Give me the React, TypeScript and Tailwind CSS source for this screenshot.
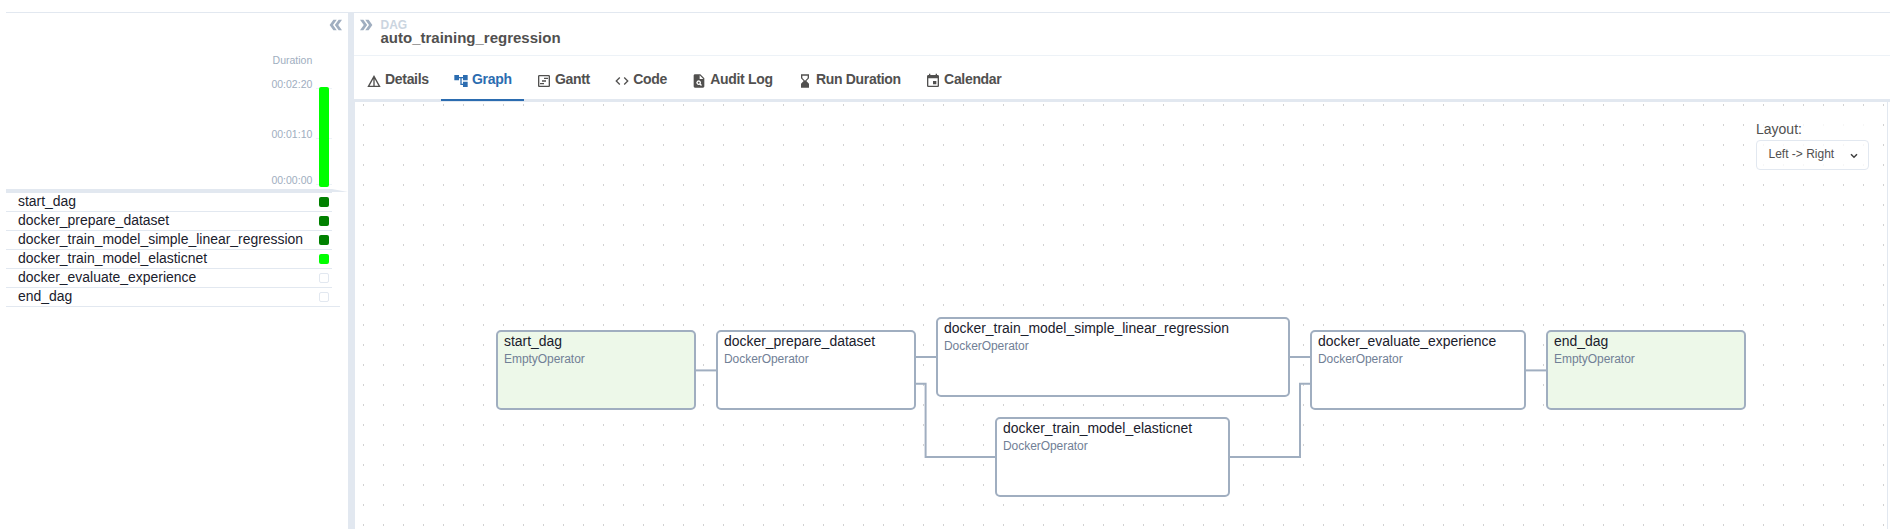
import React from "react";
import type { IconType } from "react-icons";
import {
  MdAccountTree,
  MdCode,
  MdDetails,
  MdDoubleArrow,
  MdEvent,
  MdHourglassBottom,
  MdOutlineViewTimeline,
  MdPlagiarism,
} from "react-icons/md";

const tasks = [
  { id: "start_dag", color: "bg-[#008000]" },
  { id: "docker_prepare_dataset", color: "bg-[#008000]" },
  { id: "docker_train_model_simple_linear_regression", color: "bg-[#008000]" },
  { id: "docker_train_model_elasticnet", color: "bg-[#00ff00]" },
  { id: "docker_evaluate_experience", color: "border border-[#e2e8f0] bg-white" },
  { id: "end_dag", color: "border border-[#e2e8f0] bg-white" },
];

const tabs: { label: string; icon: IconType; active?: boolean }[] = [
  { label: "Details", icon: MdDetails },
  { label: "Graph", icon: MdAccountTree, active: true },
  { label: "Gantt", icon: MdOutlineViewTimeline },
  { label: "Code", icon: MdCode },
  { label: "Audit Log", icon: MdPlagiarism },
  { label: "Run Duration", icon: MdHourglassBottom },
  { label: "Calendar", icon: MdEvent },
];

const nodes = [
  { id: "start_dag", operator: "EmptyOperator", box: "left-[141px] top-[228px] w-[200px] bg-[#edf8e9]" },
  { id: "docker_prepare_dataset", operator: "DockerOperator", box: "left-[361px] top-[228px] w-[200px] bg-white" },
  {
    id: "docker_train_model_simple_linear_regression",
    operator: "DockerOperator",
    box: "left-[581px] top-[215px] w-[354px] bg-white",
  },
  { id: "docker_train_model_elasticnet", operator: "DockerOperator", box: "left-[640px] top-[315px] w-[235px] bg-white" },
  { id: "docker_evaluate_experience", operator: "DockerOperator", box: "left-[955px] top-[228px] w-[216px] bg-white" },
  { id: "end_dag", operator: "EmptyOperator", box: "left-[1191px] top-[228px] w-[200px] bg-[#edf8e9]" },
];

const edges = [
  "M341 268.4H361",
  "M561 255H581",
  "M561 281.7H570.6V355H640",
  "M935 255H955",
  "M875 355H945V281.7H955",
  "M1171 268.4H1191",
];

function GridPanel() {
  return (
    <aside className="flex w-[342px] shrink-0 flex-col">
      <div className="flex h-[176px] justify-end">
        <div className="flex flex-col items-end pt-10 pr-[0.7px] text-[10.5px] leading-[14px] text-[#a0aec0]">
          <span>Duration</span>
          <span className="mt-[10px]">00:02:20</span>
          <span className="mt-9">00:01:10</span>
          <span className="mt-8">00:00:00</span>
        </div>
        <div className="flex w-[35px] flex-col">
          <button className="mt-[3px] mr-[3px] self-end text-[#a0aec0]">
            <MdDoubleArrow size={18} className="rotate-180" />
          </button>
          <div className="relative mt-[53px] ml-[3px] h-[100px] w-4">
            <div className="absolute top-px h-px w-4 bg-[#edf2f7]" />
            <div className="absolute top-[51px] h-px w-4 bg-[#edf2f7]" />
            <div className="absolute top-[97px] h-px w-4 bg-[#edf2f7]" />
            <div className="relative mx-[3px] h-[100px] rounded-[2px] bg-[#00ff00]" />
          </div>
        </div>
      </div>
      <div className="h-[3px] border-r-[16px] border-b-[3px] border-r-transparent border-b-[#e2e8f0]" />
      <ul className="mr-2 border-b border-[#e2e8f0]">
        {tasks.map((t) => (
          <li
            key={t.id}
            className="mr-2 flex h-[19px] items-center justify-between border-t border-[#e2e8f0] pr-[3px] pl-3"
          >
            <span className="pb-[2px] text-[13.95px] leading-[16px] text-[#1a202c]">{t.id}</span>
            <span className={`size-[10px] rounded-[2px] ${t.color}`} />
          </li>
        ))}
      </ul>
    </aside>
  );
}

function Canvas() {
  return (
    <div className="relative mr-[2px] flex flex-1 items-start justify-end overflow-hidden border-x border-[#e2e8f0]">
      <svg className="absolute inset-0 size-full">
        <defs>
          <pattern id="dots" x="8" y="2" width="20" height="20" patternUnits="userSpaceOnUse">
            <rect width="1" height="2" fill="#d2d2d2" />
          </pattern>
        </defs>
        <rect width="100%" height="100%" fill="url(#dots)" />
        {edges.map((d) => (
          <path key={d} d={d} fill="none" stroke="#a0aec0" strokeWidth="2" />
        ))}
      </svg>
      {nodes.map((n) => (
        <div
          key={n.id}
          className={`absolute flex h-20 flex-col rounded-[5px] border-2 border-[#a0aec0] px-[6px] ${n.box}`}
        >
          <span className="text-[13.95px] leading-[18px] text-[#1a202c]">{n.id}</span>
          <span className="text-[12px] leading-[19px] tracking-[-0.05px] text-[#718096]">{n.operator}</span>
        </div>
      ))}
      <div className="relative mt-[17px] mr-[18px] w-[113px] bg-white/80 text-[#51504f]">
        <div className="text-[14px] leading-[21px]">Layout:</div>
        <button className="flex h-[30px] w-full items-center justify-between rounded-[4px] border border-[#e2e8f0] pr-[10px] pb-[3px] pl-[11.5px] text-[12px] leading-4">
          <span>Left -&gt; Right</span>
          <svg width="8" height="6" viewBox="0 0 8 6" className="mt-[4px]">
            <path d="M1 1.2L4 4.2L7 1.2" fill="none" stroke="#3f3f3f" strokeWidth="1.5" />
          </svg>
        </button>
      </div>
    </div>
  );
}

export default function App() {
  return (
    <div className="flex h-[529px] w-[1890px] flex-col overflow-hidden bg-white pt-3 pl-[6px] font-['Liberation_Sans',Arial,sans-serif]">
      <div className="flex flex-1 border-t border-[#e2e8f0]">
        <GridPanel />
        <div className="w-[6px] shrink-0 bg-[#e2e8f0]" />
        <main className="flex min-w-0 flex-1 flex-col">
          <header className="flex h-[43px] border-b border-[#edf2f7] pl-[3px]">
            <button className="mt-[3px] self-start text-[#a0aec0]">
              <MdDoubleArrow size={18} />
            </button>
            <div className="ml-[5.5px] pt-[6px] font-bold">
              <div className="text-[12px] leading-[12px] text-[#cbd5e0]">DAG</div>
              <div className="text-[15px] leading-[14px] text-[#51504f]">auto_training_regression</div>
            </div>
          </header>
          <nav className="flex h-[46px] border-b-[3px] border-[#e2e8f0]">
            {tabs.map(({ label, icon: Icon, active }) => (
              <button
                key={label}
                className={`-mb-[2px] flex h-[45px] items-center gap-[2.8px] border-b-2 px-[12.25px] text-[14px] font-bold tracking-[-0.32px] ${
                  active ? "border-[#2b6cb0] text-[#2b6cb0]" : "border-transparent text-[#51504f]"
                }`}
              >
                <Icon size={16} className="mt-[7px]" />
                <span className="mt-[3px] leading-4">{label}</span>
              </button>
            ))}
          </nav>
          <Canvas />
        </main>
      </div>
    </div>
  );
}
